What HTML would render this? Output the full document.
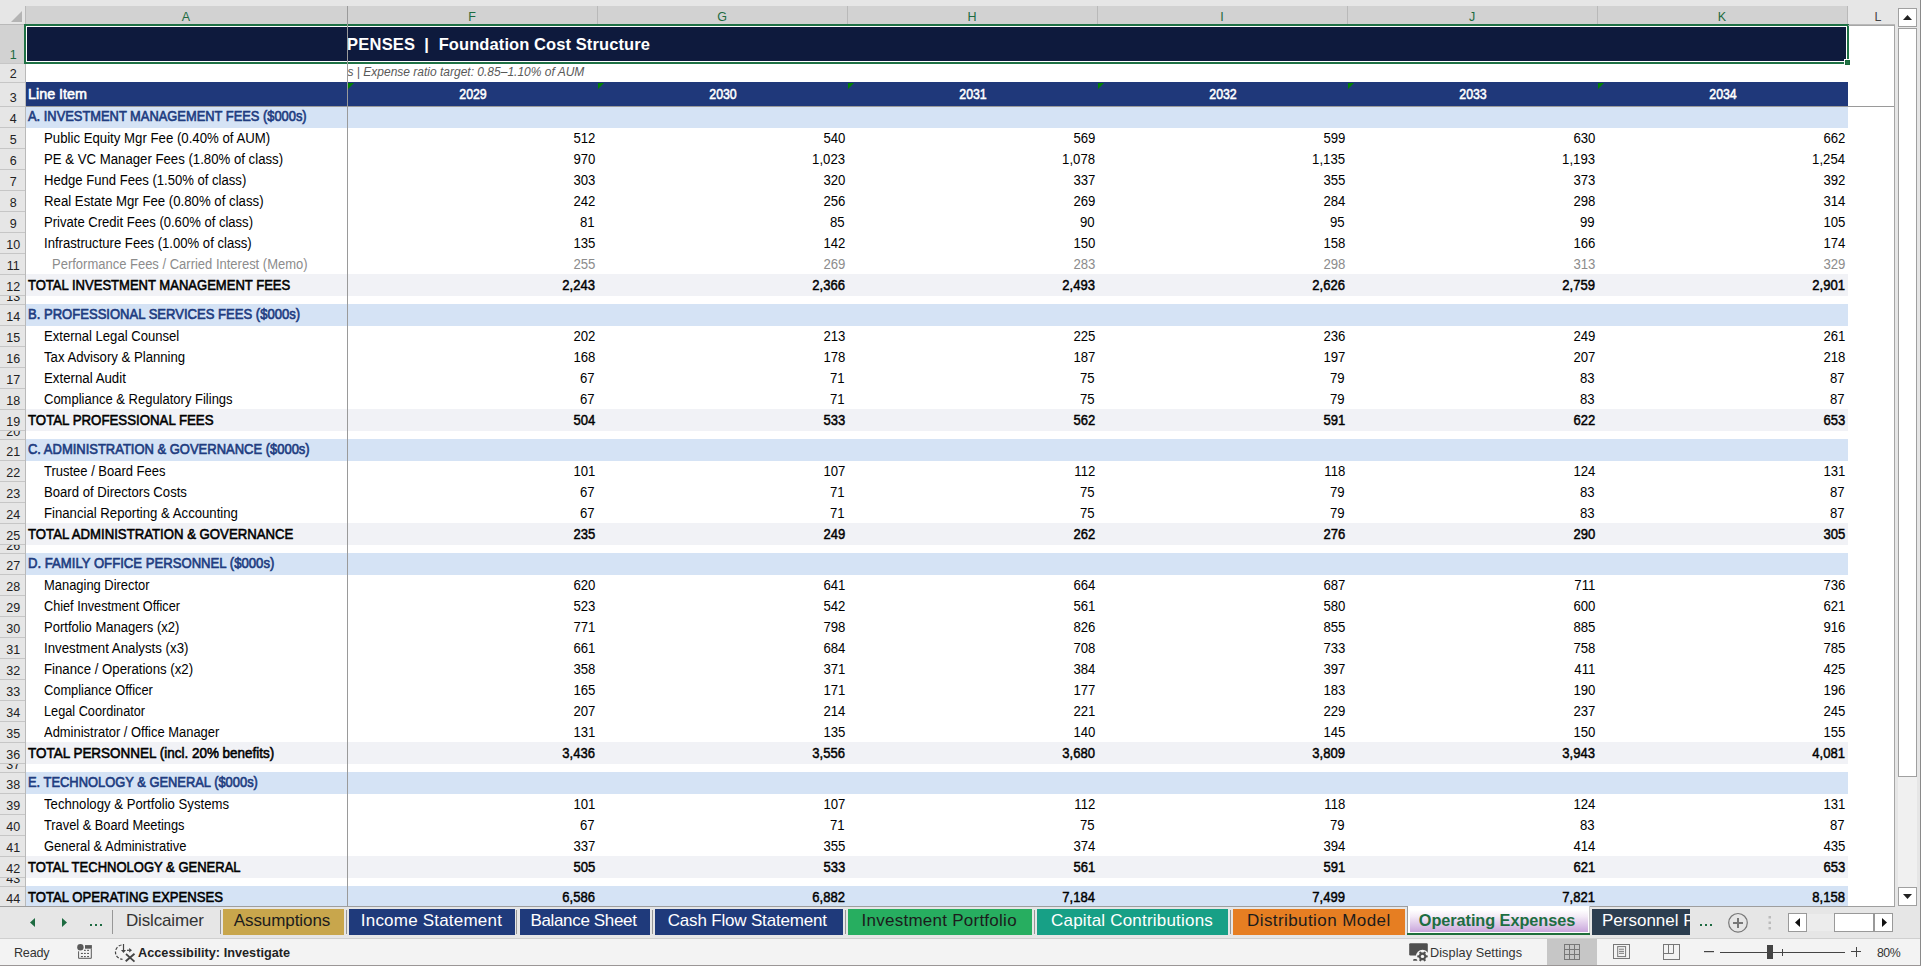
<!DOCTYPE html><html><head><meta charset="utf-8"><style>
html,body{margin:0;padding:0;}
body{width:1921px;height:966px;overflow:hidden;position:relative;background:#fff;font-family:"Liberation Sans", sans-serif;}
div{box-sizing:border-box;}
</style></head><body>
<div style="position:absolute;left:0px;top:0px;width:1921px;height:24px;background:#e6e6e6"></div>
<div style="position:absolute;left:25px;top:6px;width:1823px;height:18px;background:#d2d2d2"></div>
<svg style="position:absolute;left:0;top:0" width="25" height="24"><polygon points="11,22 22,22 22,11" fill="#b4b4b4"/></svg>
<div style="position:absolute;left:25px;top:6px;width:1px;height:18px;background:#b9b9b9"></div>
<div style="position:absolute;left:347px;top:6px;width:1px;height:18px;background:#b9b9b9"></div>
<div style="position:absolute;left:597px;top:6px;width:1px;height:18px;background:#b9b9b9"></div>
<div style="position:absolute;left:847px;top:6px;width:1px;height:18px;background:#b9b9b9"></div>
<div style="position:absolute;left:1097px;top:6px;width:1px;height:18px;background:#b9b9b9"></div>
<div style="position:absolute;left:1347px;top:6px;width:1px;height:18px;background:#b9b9b9"></div>
<div style="position:absolute;left:1597px;top:6px;width:1px;height:18px;background:#b9b9b9"></div>
<div style="position:absolute;left:1847px;top:6px;width:1px;height:18px;background:#b9b9b9"></div>
<div style="position:absolute;left:0px;top:24px;width:1895px;height:1px;background:#b9b9b9"></div>
<div style="position:absolute;left:-14.0px;width:400px;text-align:center;top:6.67px;height:20px;line-height:20px;font-size:12.5px;white-space:pre;color:#1d6b41">A</div>
<div style="position:absolute;left:272.0px;width:400px;text-align:center;top:6.67px;height:20px;line-height:20px;font-size:12.5px;white-space:pre;color:#1d6b41">F</div>
<div style="position:absolute;left:522.0px;width:400px;text-align:center;top:6.67px;height:20px;line-height:20px;font-size:12.5px;white-space:pre;color:#1d6b41">G</div>
<div style="position:absolute;left:772.0px;width:400px;text-align:center;top:6.67px;height:20px;line-height:20px;font-size:12.5px;white-space:pre;color:#1d6b41">H</div>
<div style="position:absolute;left:1022.0px;width:400px;text-align:center;top:6.67px;height:20px;line-height:20px;font-size:12.5px;white-space:pre;color:#1d6b41">I</div>
<div style="position:absolute;left:1272.0px;width:400px;text-align:center;top:6.67px;height:20px;line-height:20px;font-size:12.5px;white-space:pre;color:#1d6b41">J</div>
<div style="position:absolute;left:1522.0px;width:400px;text-align:center;top:6.67px;height:20px;line-height:20px;font-size:12.5px;white-space:pre;color:#1d6b41">K</div>
<div style="position:absolute;left:1678px;width:400px;text-align:center;top:6.67px;height:20px;line-height:20px;font-size:12.5px;white-space:pre;color:#444">L</div>
<div style="position:absolute;left:0px;top:25px;width:25px;height:881px;background:#e6e6e6"></div>
<div style="position:absolute;left:25px;top:25px;width:1px;height:881px;background:#b9b9b9"></div>
<div style="position:absolute;left:0px;top:25px;width:25px;height:38px;background:#d2d2d2"></div>
<div style="position:absolute;left:0px;top:63px;width:25px;height:1px;background:#c6c6c6"></div>
<div style="position:absolute;left:-186.7px;width:400px;text-align:center;top:44.67px;height:20px;line-height:20px;font-size:12.5px;white-space:pre;color:#1d6b41">1</div>
<div style="position:absolute;left:0px;top:82px;width:25px;height:1px;background:#c6c6c6"></div>
<div style="position:absolute;left:-186.7px;width:400px;text-align:center;top:63.67px;height:20px;line-height:20px;font-size:12.5px;white-space:pre;color:#222">2</div>
<div style="position:absolute;left:0px;top:106px;width:25px;height:1px;background:#c6c6c6"></div>
<div style="position:absolute;left:-186.7px;width:400px;text-align:center;top:87.67px;height:20px;line-height:20px;font-size:12.5px;white-space:pre;color:#222">3</div>
<div style="position:absolute;left:0px;top:127px;width:25px;height:1px;background:#c6c6c6"></div>
<div style="position:absolute;left:-186.7px;width:400px;text-align:center;top:108.67px;height:20px;line-height:20px;font-size:12.5px;white-space:pre;color:#222">4</div>
<div style="position:absolute;left:0px;top:148px;width:25px;height:1px;background:#c6c6c6"></div>
<div style="position:absolute;left:-186.7px;width:400px;text-align:center;top:129.67px;height:20px;line-height:20px;font-size:12.5px;white-space:pre;color:#222">5</div>
<div style="position:absolute;left:0px;top:169px;width:25px;height:1px;background:#c6c6c6"></div>
<div style="position:absolute;left:-186.7px;width:400px;text-align:center;top:150.67px;height:20px;line-height:20px;font-size:12.5px;white-space:pre;color:#222">6</div>
<div style="position:absolute;left:0px;top:190px;width:25px;height:1px;background:#c6c6c6"></div>
<div style="position:absolute;left:-186.7px;width:400px;text-align:center;top:171.67px;height:20px;line-height:20px;font-size:12.5px;white-space:pre;color:#222">7</div>
<div style="position:absolute;left:0px;top:211px;width:25px;height:1px;background:#c6c6c6"></div>
<div style="position:absolute;left:-186.7px;width:400px;text-align:center;top:192.67px;height:20px;line-height:20px;font-size:12.5px;white-space:pre;color:#222">8</div>
<div style="position:absolute;left:0px;top:232px;width:25px;height:1px;background:#c6c6c6"></div>
<div style="position:absolute;left:-186.7px;width:400px;text-align:center;top:213.67px;height:20px;line-height:20px;font-size:12.5px;white-space:pre;color:#222">9</div>
<div style="position:absolute;left:0px;top:253px;width:25px;height:1px;background:#c6c6c6"></div>
<div style="position:absolute;left:-186.7px;width:400px;text-align:center;top:234.67px;height:20px;line-height:20px;font-size:12.5px;white-space:pre;color:#222">10</div>
<div style="position:absolute;left:0px;top:274px;width:25px;height:1px;background:#c6c6c6"></div>
<div style="position:absolute;left:-186.7px;width:400px;text-align:center;top:255.67px;height:20px;line-height:20px;font-size:12.5px;white-space:pre;color:#222">11</div>
<div style="position:absolute;left:0px;top:295px;width:25px;height:1px;background:#c6c6c6"></div>
<div style="position:absolute;left:-186.7px;width:400px;text-align:center;top:276.67px;height:20px;line-height:20px;font-size:12.5px;white-space:pre;color:#222">12</div>
<div style="position:absolute;left:0px;top:304px;width:25px;height:1px;background:#c6c6c6"></div>
<div style="position:absolute;left:0;top:296px;width:25px;height:8px;overflow:hidden">
<div style="position:absolute;left:0.8px;width:25px;text-align:center;top:-9.33px;line-height:20px;font-size:12.5px;color:#222">13</div></div>
<div style="position:absolute;left:0px;top:325px;width:25px;height:1px;background:#c6c6c6"></div>
<div style="position:absolute;left:-186.7px;width:400px;text-align:center;top:306.67px;height:20px;line-height:20px;font-size:12.5px;white-space:pre;color:#222">14</div>
<div style="position:absolute;left:0px;top:346px;width:25px;height:1px;background:#c6c6c6"></div>
<div style="position:absolute;left:-186.7px;width:400px;text-align:center;top:327.67px;height:20px;line-height:20px;font-size:12.5px;white-space:pre;color:#222">15</div>
<div style="position:absolute;left:0px;top:367px;width:25px;height:1px;background:#c6c6c6"></div>
<div style="position:absolute;left:-186.7px;width:400px;text-align:center;top:348.67px;height:20px;line-height:20px;font-size:12.5px;white-space:pre;color:#222">16</div>
<div style="position:absolute;left:0px;top:388px;width:25px;height:1px;background:#c6c6c6"></div>
<div style="position:absolute;left:-186.7px;width:400px;text-align:center;top:369.67px;height:20px;line-height:20px;font-size:12.5px;white-space:pre;color:#222">17</div>
<div style="position:absolute;left:0px;top:409px;width:25px;height:1px;background:#c6c6c6"></div>
<div style="position:absolute;left:-186.7px;width:400px;text-align:center;top:390.67px;height:20px;line-height:20px;font-size:12.5px;white-space:pre;color:#222">18</div>
<div style="position:absolute;left:0px;top:430px;width:25px;height:1px;background:#c6c6c6"></div>
<div style="position:absolute;left:-186.7px;width:400px;text-align:center;top:411.67px;height:20px;line-height:20px;font-size:12.5px;white-space:pre;color:#222">19</div>
<div style="position:absolute;left:0px;top:439px;width:25px;height:1px;background:#c6c6c6"></div>
<div style="position:absolute;left:0;top:431px;width:25px;height:8px;overflow:hidden">
<div style="position:absolute;left:0.8px;width:25px;text-align:center;top:-9.33px;line-height:20px;font-size:12.5px;color:#222">20</div></div>
<div style="position:absolute;left:0px;top:460px;width:25px;height:1px;background:#c6c6c6"></div>
<div style="position:absolute;left:-186.7px;width:400px;text-align:center;top:441.67px;height:20px;line-height:20px;font-size:12.5px;white-space:pre;color:#222">21</div>
<div style="position:absolute;left:0px;top:481px;width:25px;height:1px;background:#c6c6c6"></div>
<div style="position:absolute;left:-186.7px;width:400px;text-align:center;top:462.67px;height:20px;line-height:20px;font-size:12.5px;white-space:pre;color:#222">22</div>
<div style="position:absolute;left:0px;top:502px;width:25px;height:1px;background:#c6c6c6"></div>
<div style="position:absolute;left:-186.7px;width:400px;text-align:center;top:483.67px;height:20px;line-height:20px;font-size:12.5px;white-space:pre;color:#222">23</div>
<div style="position:absolute;left:0px;top:523px;width:25px;height:1px;background:#c6c6c6"></div>
<div style="position:absolute;left:-186.7px;width:400px;text-align:center;top:504.67px;height:20px;line-height:20px;font-size:12.5px;white-space:pre;color:#222">24</div>
<div style="position:absolute;left:0px;top:544px;width:25px;height:1px;background:#c6c6c6"></div>
<div style="position:absolute;left:-186.7px;width:400px;text-align:center;top:525.67px;height:20px;line-height:20px;font-size:12.5px;white-space:pre;color:#222">25</div>
<div style="position:absolute;left:0px;top:553px;width:25px;height:1px;background:#c6c6c6"></div>
<div style="position:absolute;left:0;top:545px;width:25px;height:8px;overflow:hidden">
<div style="position:absolute;left:0.8px;width:25px;text-align:center;top:-9.33px;line-height:20px;font-size:12.5px;color:#222">26</div></div>
<div style="position:absolute;left:0px;top:574px;width:25px;height:1px;background:#c6c6c6"></div>
<div style="position:absolute;left:-186.7px;width:400px;text-align:center;top:555.67px;height:20px;line-height:20px;font-size:12.5px;white-space:pre;color:#222">27</div>
<div style="position:absolute;left:0px;top:595px;width:25px;height:1px;background:#c6c6c6"></div>
<div style="position:absolute;left:-186.7px;width:400px;text-align:center;top:576.67px;height:20px;line-height:20px;font-size:12.5px;white-space:pre;color:#222">28</div>
<div style="position:absolute;left:0px;top:616px;width:25px;height:1px;background:#c6c6c6"></div>
<div style="position:absolute;left:-186.7px;width:400px;text-align:center;top:597.67px;height:20px;line-height:20px;font-size:12.5px;white-space:pre;color:#222">29</div>
<div style="position:absolute;left:0px;top:637px;width:25px;height:1px;background:#c6c6c6"></div>
<div style="position:absolute;left:-186.7px;width:400px;text-align:center;top:618.67px;height:20px;line-height:20px;font-size:12.5px;white-space:pre;color:#222">30</div>
<div style="position:absolute;left:0px;top:658px;width:25px;height:1px;background:#c6c6c6"></div>
<div style="position:absolute;left:-186.7px;width:400px;text-align:center;top:639.67px;height:20px;line-height:20px;font-size:12.5px;white-space:pre;color:#222">31</div>
<div style="position:absolute;left:0px;top:679px;width:25px;height:1px;background:#c6c6c6"></div>
<div style="position:absolute;left:-186.7px;width:400px;text-align:center;top:660.67px;height:20px;line-height:20px;font-size:12.5px;white-space:pre;color:#222">32</div>
<div style="position:absolute;left:0px;top:700px;width:25px;height:1px;background:#c6c6c6"></div>
<div style="position:absolute;left:-186.7px;width:400px;text-align:center;top:681.67px;height:20px;line-height:20px;font-size:12.5px;white-space:pre;color:#222">33</div>
<div style="position:absolute;left:0px;top:721px;width:25px;height:1px;background:#c6c6c6"></div>
<div style="position:absolute;left:-186.7px;width:400px;text-align:center;top:702.67px;height:20px;line-height:20px;font-size:12.5px;white-space:pre;color:#222">34</div>
<div style="position:absolute;left:0px;top:742px;width:25px;height:1px;background:#c6c6c6"></div>
<div style="position:absolute;left:-186.7px;width:400px;text-align:center;top:723.67px;height:20px;line-height:20px;font-size:12.5px;white-space:pre;color:#222">35</div>
<div style="position:absolute;left:0px;top:763px;width:25px;height:1px;background:#c6c6c6"></div>
<div style="position:absolute;left:-186.7px;width:400px;text-align:center;top:744.67px;height:20px;line-height:20px;font-size:12.5px;white-space:pre;color:#222">36</div>
<div style="position:absolute;left:0px;top:772px;width:25px;height:1px;background:#c6c6c6"></div>
<div style="position:absolute;left:0;top:764px;width:25px;height:8px;overflow:hidden">
<div style="position:absolute;left:0.8px;width:25px;text-align:center;top:-9.33px;line-height:20px;font-size:12.5px;color:#222">37</div></div>
<div style="position:absolute;left:0px;top:793px;width:25px;height:1px;background:#c6c6c6"></div>
<div style="position:absolute;left:-186.7px;width:400px;text-align:center;top:774.67px;height:20px;line-height:20px;font-size:12.5px;white-space:pre;color:#222">38</div>
<div style="position:absolute;left:0px;top:814px;width:25px;height:1px;background:#c6c6c6"></div>
<div style="position:absolute;left:-186.7px;width:400px;text-align:center;top:795.67px;height:20px;line-height:20px;font-size:12.5px;white-space:pre;color:#222">39</div>
<div style="position:absolute;left:0px;top:835px;width:25px;height:1px;background:#c6c6c6"></div>
<div style="position:absolute;left:-186.7px;width:400px;text-align:center;top:816.67px;height:20px;line-height:20px;font-size:12.5px;white-space:pre;color:#222">40</div>
<div style="position:absolute;left:0px;top:856px;width:25px;height:1px;background:#c6c6c6"></div>
<div style="position:absolute;left:-186.7px;width:400px;text-align:center;top:837.67px;height:20px;line-height:20px;font-size:12.5px;white-space:pre;color:#222">41</div>
<div style="position:absolute;left:0px;top:877px;width:25px;height:1px;background:#c6c6c6"></div>
<div style="position:absolute;left:-186.7px;width:400px;text-align:center;top:858.67px;height:20px;line-height:20px;font-size:12.5px;white-space:pre;color:#222">42</div>
<div style="position:absolute;left:0px;top:886px;width:25px;height:1px;background:#c6c6c6"></div>
<div style="position:absolute;left:0;top:878px;width:25px;height:8px;overflow:hidden">
<div style="position:absolute;left:0.8px;width:25px;text-align:center;top:-9.33px;line-height:20px;font-size:12.5px;color:#222">43</div></div>
<div style="position:absolute;left:0px;top:907px;width:25px;height:1px;background:#c6c6c6"></div>
<div style="position:absolute;left:-186.7px;width:400px;text-align:center;top:888.67px;height:20px;line-height:20px;font-size:12.5px;white-space:pre;color:#222">44</div>
<div style="position:absolute;left:26px;top:25px;width:1821px;height:38px;background:#0e1a3d"></div>
<div style="position:absolute;left:26px;top:82px;width:1822px;height:24px;background:#1f387a"></div>
<div style="position:absolute;left:26px;top:106px;width:1869px;height:1px;background:#9a9a9a"></div>
<div style="position:absolute;left:26px;top:107px;width:1822px;height:21px;background:#d5e3f5"></div>
<div style="position:absolute;left:26px;top:274px;width:1822px;height:22px;background:#f1f2f6"></div>
<div style="position:absolute;left:26px;top:304px;width:1822px;height:22px;background:#d5e3f5"></div>
<div style="position:absolute;left:26px;top:409px;width:1822px;height:22px;background:#f1f2f6"></div>
<div style="position:absolute;left:26px;top:439px;width:1822px;height:22px;background:#d5e3f5"></div>
<div style="position:absolute;left:26px;top:523px;width:1822px;height:22px;background:#f1f2f6"></div>
<div style="position:absolute;left:26px;top:553px;width:1822px;height:22px;background:#d5e3f5"></div>
<div style="position:absolute;left:26px;top:742px;width:1822px;height:22px;background:#f1f2f6"></div>
<div style="position:absolute;left:26px;top:772px;width:1822px;height:22px;background:#d5e3f5"></div>
<div style="position:absolute;left:26px;top:856px;width:1822px;height:22px;background:#f1f2f6"></div>
<div style="position:absolute;left:26px;top:886px;width:1822px;height:22px;background:#d5e3f5"></div>
<div style="position:absolute;left:24px;top:24px;width:1825px;height:40px;border:2px solid #1e7145;"></div>
<div style="position:absolute;left:26px;top:26px;width:1821px;height:36px;border:1px solid #fff;"></div>
<div style="position:absolute;left:1844px;top:59px;width:7px;height:7px;background:#fff"></div>
<div style="position:absolute;left:1845px;top:60px;width:5px;height:5px;background:#217346;border:1px solid #1a6a3a"></div>
<div style="position:absolute;left:348px;top:25px;width:1498px;height:38px;overflow:hidden">
<div style="position:absolute;transform-origin:0 0;left:-0.9px;top:9.28px;height:20px;line-height:20px;font-size:16.5px;white-space:pre;color:#fff;font-weight:bold;letter-spacing:0.2px">PENSES</div>
<div style="position:absolute;transform-origin:0 0;left:76.2px;top:9.28px;height:20px;line-height:20px;font-size:16.5px;white-space:pre;color:#fff;font-weight:bold">|</div>
<div style="position:absolute;transform-origin:0 0;left:90.7px;top:9.28px;height:20px;line-height:20px;font-size:16.5px;white-space:pre;color:#fff;font-weight:bold;letter-spacing:0.09px">Foundation Cost Structure</div>
</div>
<div style="position:absolute;left:348px;top:63px;width:1498px;height:19px;overflow:hidden">
<div style="position:absolute;transform-origin:0 0;left:-0.5px;top:-1.16px;height:20px;line-height:20px;font-size:12px;white-space:pre;color:#595959;font-style:italic">s | Expense ratio target: 0.85–1.10% of AUM</div>
</div>
<div style="position:absolute;transform-origin:0 0;left:28px;top:83.65px;height:20px;line-height:20px;font-size:14px;white-space:pre;color:#fff;-webkit-text-stroke:0.55px currentColor;transform:scaleX(1.025)">Line Item</div>
<div style="position:absolute;left:273.0px;width:400px;text-align:center;top:84.15px;height:20px;line-height:20px;font-size:14px;white-space:pre;color:#fff;font-weight:normal;-webkit-text-stroke:0.55px currentColor;transform:scaleX(0.933);transform:scaleX(0.88)">2029</div>
<svg style="position:absolute;left:348px;top:83px" width="6" height="6"><polygon points="0,0 6,0 0,6" fill="#008000"/></svg>
<div style="position:absolute;left:523.0px;width:400px;text-align:center;top:84.15px;height:20px;line-height:20px;font-size:14px;white-space:pre;color:#fff;font-weight:normal;-webkit-text-stroke:0.55px currentColor;transform:scaleX(0.933);transform:scaleX(0.88)">2030</div>
<svg style="position:absolute;left:598px;top:83px" width="6" height="6"><polygon points="0,0 6,0 0,6" fill="#008000"/></svg>
<div style="position:absolute;left:773.0px;width:400px;text-align:center;top:84.15px;height:20px;line-height:20px;font-size:14px;white-space:pre;color:#fff;font-weight:normal;-webkit-text-stroke:0.55px currentColor;transform:scaleX(0.933);transform:scaleX(0.88)">2031</div>
<svg style="position:absolute;left:848px;top:83px" width="6" height="6"><polygon points="0,0 6,0 0,6" fill="#008000"/></svg>
<div style="position:absolute;left:1023.0px;width:400px;text-align:center;top:84.15px;height:20px;line-height:20px;font-size:14px;white-space:pre;color:#fff;font-weight:normal;-webkit-text-stroke:0.55px currentColor;transform:scaleX(0.933);transform:scaleX(0.88)">2032</div>
<svg style="position:absolute;left:1098px;top:83px" width="6" height="6"><polygon points="0,0 6,0 0,6" fill="#008000"/></svg>
<div style="position:absolute;left:1273.0px;width:400px;text-align:center;top:84.15px;height:20px;line-height:20px;font-size:14px;white-space:pre;color:#fff;font-weight:normal;-webkit-text-stroke:0.55px currentColor;transform:scaleX(0.933);transform:scaleX(0.88)">2033</div>
<svg style="position:absolute;left:1348px;top:83px" width="6" height="6"><polygon points="0,0 6,0 0,6" fill="#008000"/></svg>
<div style="position:absolute;left:1523.0px;width:400px;text-align:center;top:84.15px;height:20px;line-height:20px;font-size:14px;white-space:pre;color:#fff;font-weight:normal;-webkit-text-stroke:0.55px currentColor;transform:scaleX(0.933);transform:scaleX(0.88)">2034</div>
<svg style="position:absolute;left:1598px;top:83px" width="6" height="6"><polygon points="0,0 6,0 0,6" fill="#008000"/></svg>
<div style="position:absolute;transform-origin:0 0;left:28px;top:106.15px;height:20px;line-height:20px;font-size:14px;white-space:pre;color:#203c80;font-weight:normal;-webkit-text-stroke:0.55px currentColor;transform:scaleX(0.933);-webkit-text-stroke:0.62px currentColor;transform:scaleX(0.92)">A. INVESTMENT MANAGEMENT FEES ($000s)</div>
<div style="position:absolute;transform-origin:0 0;left:43.7px;top:128.15px;height:20px;line-height:20px;font-size:14px;white-space:pre;color:#000;transform:scaleX(0.9437)">Public Equity Mgr Fee (0.40% of AUM)</div>
<div style="position:absolute;transform-origin:100% 0;right:1326px;top:128.15px;height:20px;line-height:20px;font-size:14px;white-space:pre;color:#000;transform:scaleX(0.94)">512</div>
<div style="position:absolute;transform-origin:100% 0;right:1076px;top:128.15px;height:20px;line-height:20px;font-size:14px;white-space:pre;color:#000;transform:scaleX(0.94)">540</div>
<div style="position:absolute;transform-origin:100% 0;right:826px;top:128.15px;height:20px;line-height:20px;font-size:14px;white-space:pre;color:#000;transform:scaleX(0.94)">569</div>
<div style="position:absolute;transform-origin:100% 0;right:576px;top:128.15px;height:20px;line-height:20px;font-size:14px;white-space:pre;color:#000;transform:scaleX(0.94)">599</div>
<div style="position:absolute;transform-origin:100% 0;right:326px;top:128.15px;height:20px;line-height:20px;font-size:14px;white-space:pre;color:#000;transform:scaleX(0.94)">630</div>
<div style="position:absolute;transform-origin:100% 0;right:76px;top:128.15px;height:20px;line-height:20px;font-size:14px;white-space:pre;color:#000;transform:scaleX(0.94)">662</div>
<div style="position:absolute;transform-origin:0 0;left:43.7px;top:149.15px;height:20px;line-height:20px;font-size:14px;white-space:pre;color:#000;transform:scaleX(0.9425)">PE &amp; VC Manager Fees (1.80% of class)</div>
<div style="position:absolute;transform-origin:100% 0;right:1326px;top:149.15px;height:20px;line-height:20px;font-size:14px;white-space:pre;color:#000;transform:scaleX(0.94)">970</div>
<div style="position:absolute;transform-origin:100% 0;right:1076px;top:149.15px;height:20px;line-height:20px;font-size:14px;white-space:pre;color:#000;transform:scaleX(0.94)">1,023</div>
<div style="position:absolute;transform-origin:100% 0;right:826px;top:149.15px;height:20px;line-height:20px;font-size:14px;white-space:pre;color:#000;transform:scaleX(0.94)">1,078</div>
<div style="position:absolute;transform-origin:100% 0;right:576px;top:149.15px;height:20px;line-height:20px;font-size:14px;white-space:pre;color:#000;transform:scaleX(0.94)">1,135</div>
<div style="position:absolute;transform-origin:100% 0;right:326px;top:149.15px;height:20px;line-height:20px;font-size:14px;white-space:pre;color:#000;transform:scaleX(0.94)">1,193</div>
<div style="position:absolute;transform-origin:100% 0;right:76px;top:149.15px;height:20px;line-height:20px;font-size:14px;white-space:pre;color:#000;transform:scaleX(0.94)">1,254</div>
<div style="position:absolute;transform-origin:0 0;left:43.7px;top:170.15px;height:20px;line-height:20px;font-size:14px;white-space:pre;color:#000;transform:scaleX(0.9349)">Hedge Fund Fees (1.50% of class)</div>
<div style="position:absolute;transform-origin:100% 0;right:1326px;top:170.15px;height:20px;line-height:20px;font-size:14px;white-space:pre;color:#000;transform:scaleX(0.94)">303</div>
<div style="position:absolute;transform-origin:100% 0;right:1076px;top:170.15px;height:20px;line-height:20px;font-size:14px;white-space:pre;color:#000;transform:scaleX(0.94)">320</div>
<div style="position:absolute;transform-origin:100% 0;right:826px;top:170.15px;height:20px;line-height:20px;font-size:14px;white-space:pre;color:#000;transform:scaleX(0.94)">337</div>
<div style="position:absolute;transform-origin:100% 0;right:576px;top:170.15px;height:20px;line-height:20px;font-size:14px;white-space:pre;color:#000;transform:scaleX(0.94)">355</div>
<div style="position:absolute;transform-origin:100% 0;right:326px;top:170.15px;height:20px;line-height:20px;font-size:14px;white-space:pre;color:#000;transform:scaleX(0.94)">373</div>
<div style="position:absolute;transform-origin:100% 0;right:76px;top:170.15px;height:20px;line-height:20px;font-size:14px;white-space:pre;color:#000;transform:scaleX(0.94)">392</div>
<div style="position:absolute;transform-origin:0 0;left:43.7px;top:191.15px;height:20px;line-height:20px;font-size:14px;white-space:pre;color:#000;transform:scaleX(0.9437)">Real Estate Mgr Fee (0.80% of class)</div>
<div style="position:absolute;transform-origin:100% 0;right:1326px;top:191.15px;height:20px;line-height:20px;font-size:14px;white-space:pre;color:#000;transform:scaleX(0.94)">242</div>
<div style="position:absolute;transform-origin:100% 0;right:1076px;top:191.15px;height:20px;line-height:20px;font-size:14px;white-space:pre;color:#000;transform:scaleX(0.94)">256</div>
<div style="position:absolute;transform-origin:100% 0;right:826px;top:191.15px;height:20px;line-height:20px;font-size:14px;white-space:pre;color:#000;transform:scaleX(0.94)">269</div>
<div style="position:absolute;transform-origin:100% 0;right:576px;top:191.15px;height:20px;line-height:20px;font-size:14px;white-space:pre;color:#000;transform:scaleX(0.94)">284</div>
<div style="position:absolute;transform-origin:100% 0;right:326px;top:191.15px;height:20px;line-height:20px;font-size:14px;white-space:pre;color:#000;transform:scaleX(0.94)">298</div>
<div style="position:absolute;transform-origin:100% 0;right:76px;top:191.15px;height:20px;line-height:20px;font-size:14px;white-space:pre;color:#000;transform:scaleX(0.94)">314</div>
<div style="position:absolute;transform-origin:0 0;left:43.7px;top:212.15px;height:20px;line-height:20px;font-size:14px;white-space:pre;color:#000;transform:scaleX(0.9327)">Private Credit Fees (0.60% of class)</div>
<div style="position:absolute;transform-origin:100% 0;right:1326px;top:212.15px;height:20px;line-height:20px;font-size:14px;white-space:pre;color:#000;transform:scaleX(0.94)">81</div>
<div style="position:absolute;transform-origin:100% 0;right:1076px;top:212.15px;height:20px;line-height:20px;font-size:14px;white-space:pre;color:#000;transform:scaleX(0.94)">85</div>
<div style="position:absolute;transform-origin:100% 0;right:826px;top:212.15px;height:20px;line-height:20px;font-size:14px;white-space:pre;color:#000;transform:scaleX(0.94)">90</div>
<div style="position:absolute;transform-origin:100% 0;right:576px;top:212.15px;height:20px;line-height:20px;font-size:14px;white-space:pre;color:#000;transform:scaleX(0.94)">95</div>
<div style="position:absolute;transform-origin:100% 0;right:326px;top:212.15px;height:20px;line-height:20px;font-size:14px;white-space:pre;color:#000;transform:scaleX(0.94)">99</div>
<div style="position:absolute;transform-origin:100% 0;right:76px;top:212.15px;height:20px;line-height:20px;font-size:14px;white-space:pre;color:#000;transform:scaleX(0.94)">105</div>
<div style="position:absolute;transform-origin:0 0;left:43.7px;top:233.15px;height:20px;line-height:20px;font-size:14px;white-space:pre;color:#000;transform:scaleX(0.9364)">Infrastructure Fees (1.00% of class)</div>
<div style="position:absolute;transform-origin:100% 0;right:1326px;top:233.15px;height:20px;line-height:20px;font-size:14px;white-space:pre;color:#000;transform:scaleX(0.94)">135</div>
<div style="position:absolute;transform-origin:100% 0;right:1076px;top:233.15px;height:20px;line-height:20px;font-size:14px;white-space:pre;color:#000;transform:scaleX(0.94)">142</div>
<div style="position:absolute;transform-origin:100% 0;right:826px;top:233.15px;height:20px;line-height:20px;font-size:14px;white-space:pre;color:#000;transform:scaleX(0.94)">150</div>
<div style="position:absolute;transform-origin:100% 0;right:576px;top:233.15px;height:20px;line-height:20px;font-size:14px;white-space:pre;color:#000;transform:scaleX(0.94)">158</div>
<div style="position:absolute;transform-origin:100% 0;right:326px;top:233.15px;height:20px;line-height:20px;font-size:14px;white-space:pre;color:#000;transform:scaleX(0.94)">166</div>
<div style="position:absolute;transform-origin:100% 0;right:76px;top:233.15px;height:20px;line-height:20px;font-size:14px;white-space:pre;color:#000;transform:scaleX(0.94)">174</div>
<div style="position:absolute;transform-origin:0 0;left:52px;top:254.15px;height:20px;line-height:20px;font-size:14px;white-space:pre;color:#8c8c8c;transform:scaleX(0.928)">Performance Fees / Carried Interest (Memo)</div>
<div style="position:absolute;transform-origin:100% 0;right:1326px;top:254.15px;height:20px;line-height:20px;font-size:14px;white-space:pre;color:#8c8c8c;transform:scaleX(0.94)">255</div>
<div style="position:absolute;transform-origin:100% 0;right:1076px;top:254.15px;height:20px;line-height:20px;font-size:14px;white-space:pre;color:#8c8c8c;transform:scaleX(0.94)">269</div>
<div style="position:absolute;transform-origin:100% 0;right:826px;top:254.15px;height:20px;line-height:20px;font-size:14px;white-space:pre;color:#8c8c8c;transform:scaleX(0.94)">283</div>
<div style="position:absolute;transform-origin:100% 0;right:576px;top:254.15px;height:20px;line-height:20px;font-size:14px;white-space:pre;color:#8c8c8c;transform:scaleX(0.94)">298</div>
<div style="position:absolute;transform-origin:100% 0;right:326px;top:254.15px;height:20px;line-height:20px;font-size:14px;white-space:pre;color:#8c8c8c;transform:scaleX(0.94)">313</div>
<div style="position:absolute;transform-origin:100% 0;right:76px;top:254.15px;height:20px;line-height:20px;font-size:14px;white-space:pre;color:#8c8c8c;transform:scaleX(0.94)">329</div>
<div style="position:absolute;transform-origin:0 0;left:28px;top:275.15px;height:20px;line-height:20px;font-size:14px;white-space:pre;color:#000;font-weight:normal;-webkit-text-stroke:0.55px currentColor;transform:scaleX(0.933);transform:scaleX(0.9312)">TOTAL INVESTMENT MANAGEMENT FEES</div>
<div style="position:absolute;transform-origin:100% 0;right:1326px;top:275.15px;height:20px;line-height:20px;font-size:14px;white-space:pre;color:#000;font-weight:normal;-webkit-text-stroke:0.55px currentColor;transform:scaleX(0.933);-webkit-text-stroke:0.45px currentColor">2,243</div>
<div style="position:absolute;transform-origin:100% 0;right:1076px;top:275.15px;height:20px;line-height:20px;font-size:14px;white-space:pre;color:#000;font-weight:normal;-webkit-text-stroke:0.55px currentColor;transform:scaleX(0.933);-webkit-text-stroke:0.45px currentColor">2,366</div>
<div style="position:absolute;transform-origin:100% 0;right:826px;top:275.15px;height:20px;line-height:20px;font-size:14px;white-space:pre;color:#000;font-weight:normal;-webkit-text-stroke:0.55px currentColor;transform:scaleX(0.933);-webkit-text-stroke:0.45px currentColor">2,493</div>
<div style="position:absolute;transform-origin:100% 0;right:576px;top:275.15px;height:20px;line-height:20px;font-size:14px;white-space:pre;color:#000;font-weight:normal;-webkit-text-stroke:0.55px currentColor;transform:scaleX(0.933);-webkit-text-stroke:0.45px currentColor">2,626</div>
<div style="position:absolute;transform-origin:100% 0;right:326px;top:275.15px;height:20px;line-height:20px;font-size:14px;white-space:pre;color:#000;font-weight:normal;-webkit-text-stroke:0.55px currentColor;transform:scaleX(0.933);-webkit-text-stroke:0.45px currentColor">2,759</div>
<div style="position:absolute;transform-origin:100% 0;right:76px;top:275.15px;height:20px;line-height:20px;font-size:14px;white-space:pre;color:#000;font-weight:normal;-webkit-text-stroke:0.55px currentColor;transform:scaleX(0.933);-webkit-text-stroke:0.45px currentColor">2,901</div>
<div style="position:absolute;transform-origin:0 0;left:28px;top:304.15px;height:20px;line-height:20px;font-size:14px;white-space:pre;color:#203c80;font-weight:normal;-webkit-text-stroke:0.55px currentColor;transform:scaleX(0.933);-webkit-text-stroke:0.62px currentColor;transform:scaleX(0.9324)">B. PROFESSIONAL SERVICES FEES ($000s)</div>
<div style="position:absolute;transform-origin:0 0;left:43.7px;top:326.15px;height:20px;line-height:20px;font-size:14px;white-space:pre;color:#000;transform:scaleX(0.9336)">External Legal Counsel</div>
<div style="position:absolute;transform-origin:100% 0;right:1326px;top:326.15px;height:20px;line-height:20px;font-size:14px;white-space:pre;color:#000;transform:scaleX(0.94)">202</div>
<div style="position:absolute;transform-origin:100% 0;right:1076px;top:326.15px;height:20px;line-height:20px;font-size:14px;white-space:pre;color:#000;transform:scaleX(0.94)">213</div>
<div style="position:absolute;transform-origin:100% 0;right:826px;top:326.15px;height:20px;line-height:20px;font-size:14px;white-space:pre;color:#000;transform:scaleX(0.94)">225</div>
<div style="position:absolute;transform-origin:100% 0;right:576px;top:326.15px;height:20px;line-height:20px;font-size:14px;white-space:pre;color:#000;transform:scaleX(0.94)">236</div>
<div style="position:absolute;transform-origin:100% 0;right:326px;top:326.15px;height:20px;line-height:20px;font-size:14px;white-space:pre;color:#000;transform:scaleX(0.94)">249</div>
<div style="position:absolute;transform-origin:100% 0;right:76px;top:326.15px;height:20px;line-height:20px;font-size:14px;white-space:pre;color:#000;transform:scaleX(0.94)">261</div>
<div style="position:absolute;transform-origin:0 0;left:43.7px;top:347.15px;height:20px;line-height:20px;font-size:14px;white-space:pre;color:#000;transform:scaleX(0.94)">Tax Advisory &amp; Planning</div>
<div style="position:absolute;transform-origin:100% 0;right:1326px;top:347.15px;height:20px;line-height:20px;font-size:14px;white-space:pre;color:#000;transform:scaleX(0.94)">168</div>
<div style="position:absolute;transform-origin:100% 0;right:1076px;top:347.15px;height:20px;line-height:20px;font-size:14px;white-space:pre;color:#000;transform:scaleX(0.94)">178</div>
<div style="position:absolute;transform-origin:100% 0;right:826px;top:347.15px;height:20px;line-height:20px;font-size:14px;white-space:pre;color:#000;transform:scaleX(0.94)">187</div>
<div style="position:absolute;transform-origin:100% 0;right:576px;top:347.15px;height:20px;line-height:20px;font-size:14px;white-space:pre;color:#000;transform:scaleX(0.94)">197</div>
<div style="position:absolute;transform-origin:100% 0;right:326px;top:347.15px;height:20px;line-height:20px;font-size:14px;white-space:pre;color:#000;transform:scaleX(0.94)">207</div>
<div style="position:absolute;transform-origin:100% 0;right:76px;top:347.15px;height:20px;line-height:20px;font-size:14px;white-space:pre;color:#000;transform:scaleX(0.94)">218</div>
<div style="position:absolute;transform-origin:0 0;left:43.7px;top:368.15px;height:20px;line-height:20px;font-size:14px;white-space:pre;color:#000;transform:scaleX(0.9477)">External Audit</div>
<div style="position:absolute;transform-origin:100% 0;right:1326px;top:368.15px;height:20px;line-height:20px;font-size:14px;white-space:pre;color:#000;transform:scaleX(0.94)">67</div>
<div style="position:absolute;transform-origin:100% 0;right:1076px;top:368.15px;height:20px;line-height:20px;font-size:14px;white-space:pre;color:#000;transform:scaleX(0.94)">71</div>
<div style="position:absolute;transform-origin:100% 0;right:826px;top:368.15px;height:20px;line-height:20px;font-size:14px;white-space:pre;color:#000;transform:scaleX(0.94)">75</div>
<div style="position:absolute;transform-origin:100% 0;right:576px;top:368.15px;height:20px;line-height:20px;font-size:14px;white-space:pre;color:#000;transform:scaleX(0.94)">79</div>
<div style="position:absolute;transform-origin:100% 0;right:326px;top:368.15px;height:20px;line-height:20px;font-size:14px;white-space:pre;color:#000;transform:scaleX(0.94)">83</div>
<div style="position:absolute;transform-origin:100% 0;right:76px;top:368.15px;height:20px;line-height:20px;font-size:14px;white-space:pre;color:#000;transform:scaleX(0.94)">87</div>
<div style="position:absolute;transform-origin:0 0;left:43.7px;top:389.15px;height:20px;line-height:20px;font-size:14px;white-space:pre;color:#000;transform:scaleX(0.9286)">Compliance &amp; Regulatory Filings</div>
<div style="position:absolute;transform-origin:100% 0;right:1326px;top:389.15px;height:20px;line-height:20px;font-size:14px;white-space:pre;color:#000;transform:scaleX(0.94)">67</div>
<div style="position:absolute;transform-origin:100% 0;right:1076px;top:389.15px;height:20px;line-height:20px;font-size:14px;white-space:pre;color:#000;transform:scaleX(0.94)">71</div>
<div style="position:absolute;transform-origin:100% 0;right:826px;top:389.15px;height:20px;line-height:20px;font-size:14px;white-space:pre;color:#000;transform:scaleX(0.94)">75</div>
<div style="position:absolute;transform-origin:100% 0;right:576px;top:389.15px;height:20px;line-height:20px;font-size:14px;white-space:pre;color:#000;transform:scaleX(0.94)">79</div>
<div style="position:absolute;transform-origin:100% 0;right:326px;top:389.15px;height:20px;line-height:20px;font-size:14px;white-space:pre;color:#000;transform:scaleX(0.94)">83</div>
<div style="position:absolute;transform-origin:100% 0;right:76px;top:389.15px;height:20px;line-height:20px;font-size:14px;white-space:pre;color:#000;transform:scaleX(0.94)">87</div>
<div style="position:absolute;transform-origin:0 0;left:28px;top:410.15px;height:20px;line-height:20px;font-size:14px;white-space:pre;color:#000;font-weight:normal;-webkit-text-stroke:0.55px currentColor;transform:scaleX(0.933);transform:scaleX(0.9464)">TOTAL PROFESSIONAL FEES</div>
<div style="position:absolute;transform-origin:100% 0;right:1326px;top:410.15px;height:20px;line-height:20px;font-size:14px;white-space:pre;color:#000;font-weight:normal;-webkit-text-stroke:0.55px currentColor;transform:scaleX(0.933);-webkit-text-stroke:0.45px currentColor">504</div>
<div style="position:absolute;transform-origin:100% 0;right:1076px;top:410.15px;height:20px;line-height:20px;font-size:14px;white-space:pre;color:#000;font-weight:normal;-webkit-text-stroke:0.55px currentColor;transform:scaleX(0.933);-webkit-text-stroke:0.45px currentColor">533</div>
<div style="position:absolute;transform-origin:100% 0;right:826px;top:410.15px;height:20px;line-height:20px;font-size:14px;white-space:pre;color:#000;font-weight:normal;-webkit-text-stroke:0.55px currentColor;transform:scaleX(0.933);-webkit-text-stroke:0.45px currentColor">562</div>
<div style="position:absolute;transform-origin:100% 0;right:576px;top:410.15px;height:20px;line-height:20px;font-size:14px;white-space:pre;color:#000;font-weight:normal;-webkit-text-stroke:0.55px currentColor;transform:scaleX(0.933);-webkit-text-stroke:0.45px currentColor">591</div>
<div style="position:absolute;transform-origin:100% 0;right:326px;top:410.15px;height:20px;line-height:20px;font-size:14px;white-space:pre;color:#000;font-weight:normal;-webkit-text-stroke:0.55px currentColor;transform:scaleX(0.933);-webkit-text-stroke:0.45px currentColor">622</div>
<div style="position:absolute;transform-origin:100% 0;right:76px;top:410.15px;height:20px;line-height:20px;font-size:14px;white-space:pre;color:#000;font-weight:normal;-webkit-text-stroke:0.55px currentColor;transform:scaleX(0.933);-webkit-text-stroke:0.45px currentColor">653</div>
<div style="position:absolute;transform-origin:0 0;left:28px;top:439.15px;height:20px;line-height:20px;font-size:14px;white-space:pre;color:#203c80;font-weight:normal;-webkit-text-stroke:0.55px currentColor;transform:scaleX(0.933);-webkit-text-stroke:0.62px currentColor;transform:scaleX(0.9268)">C. ADMINISTRATION &amp; GOVERNANCE ($000s)</div>
<div style="position:absolute;transform-origin:0 0;left:43.7px;top:461.15px;height:20px;line-height:20px;font-size:14px;white-space:pre;color:#000;transform:scaleX(0.9275)">Trustee / Board Fees</div>
<div style="position:absolute;transform-origin:100% 0;right:1326px;top:461.15px;height:20px;line-height:20px;font-size:14px;white-space:pre;color:#000;transform:scaleX(0.94)">101</div>
<div style="position:absolute;transform-origin:100% 0;right:1076px;top:461.15px;height:20px;line-height:20px;font-size:14px;white-space:pre;color:#000;transform:scaleX(0.94)">107</div>
<div style="position:absolute;transform-origin:100% 0;right:826px;top:461.15px;height:20px;line-height:20px;font-size:14px;white-space:pre;color:#000;transform:scaleX(0.94)">112</div>
<div style="position:absolute;transform-origin:100% 0;right:576px;top:461.15px;height:20px;line-height:20px;font-size:14px;white-space:pre;color:#000;transform:scaleX(0.94)">118</div>
<div style="position:absolute;transform-origin:100% 0;right:326px;top:461.15px;height:20px;line-height:20px;font-size:14px;white-space:pre;color:#000;transform:scaleX(0.94)">124</div>
<div style="position:absolute;transform-origin:100% 0;right:76px;top:461.15px;height:20px;line-height:20px;font-size:14px;white-space:pre;color:#000;transform:scaleX(0.94)">131</div>
<div style="position:absolute;transform-origin:0 0;left:43.7px;top:482.15px;height:20px;line-height:20px;font-size:14px;white-space:pre;color:#000;transform:scaleX(0.9371)">Board of Directors Costs</div>
<div style="position:absolute;transform-origin:100% 0;right:1326px;top:482.15px;height:20px;line-height:20px;font-size:14px;white-space:pre;color:#000;transform:scaleX(0.94)">67</div>
<div style="position:absolute;transform-origin:100% 0;right:1076px;top:482.15px;height:20px;line-height:20px;font-size:14px;white-space:pre;color:#000;transform:scaleX(0.94)">71</div>
<div style="position:absolute;transform-origin:100% 0;right:826px;top:482.15px;height:20px;line-height:20px;font-size:14px;white-space:pre;color:#000;transform:scaleX(0.94)">75</div>
<div style="position:absolute;transform-origin:100% 0;right:576px;top:482.15px;height:20px;line-height:20px;font-size:14px;white-space:pre;color:#000;transform:scaleX(0.94)">79</div>
<div style="position:absolute;transform-origin:100% 0;right:326px;top:482.15px;height:20px;line-height:20px;font-size:14px;white-space:pre;color:#000;transform:scaleX(0.94)">83</div>
<div style="position:absolute;transform-origin:100% 0;right:76px;top:482.15px;height:20px;line-height:20px;font-size:14px;white-space:pre;color:#000;transform:scaleX(0.94)">87</div>
<div style="position:absolute;transform-origin:0 0;left:43.7px;top:503.15px;height:20px;line-height:20px;font-size:14px;white-space:pre;color:#000;transform:scaleX(0.9402)">Financial Reporting &amp; Accounting</div>
<div style="position:absolute;transform-origin:100% 0;right:1326px;top:503.15px;height:20px;line-height:20px;font-size:14px;white-space:pre;color:#000;transform:scaleX(0.94)">67</div>
<div style="position:absolute;transform-origin:100% 0;right:1076px;top:503.15px;height:20px;line-height:20px;font-size:14px;white-space:pre;color:#000;transform:scaleX(0.94)">71</div>
<div style="position:absolute;transform-origin:100% 0;right:826px;top:503.15px;height:20px;line-height:20px;font-size:14px;white-space:pre;color:#000;transform:scaleX(0.94)">75</div>
<div style="position:absolute;transform-origin:100% 0;right:576px;top:503.15px;height:20px;line-height:20px;font-size:14px;white-space:pre;color:#000;transform:scaleX(0.94)">79</div>
<div style="position:absolute;transform-origin:100% 0;right:326px;top:503.15px;height:20px;line-height:20px;font-size:14px;white-space:pre;color:#000;transform:scaleX(0.94)">83</div>
<div style="position:absolute;transform-origin:100% 0;right:76px;top:503.15px;height:20px;line-height:20px;font-size:14px;white-space:pre;color:#000;transform:scaleX(0.94)">87</div>
<div style="position:absolute;transform-origin:0 0;left:28px;top:524.15px;height:20px;line-height:20px;font-size:14px;white-space:pre;color:#000;font-weight:normal;-webkit-text-stroke:0.55px currentColor;transform:scaleX(0.933);transform:scaleX(0.9415)">TOTAL ADMINISTRATION &amp; GOVERNANCE</div>
<div style="position:absolute;transform-origin:100% 0;right:1326px;top:524.15px;height:20px;line-height:20px;font-size:14px;white-space:pre;color:#000;font-weight:normal;-webkit-text-stroke:0.55px currentColor;transform:scaleX(0.933);-webkit-text-stroke:0.45px currentColor">235</div>
<div style="position:absolute;transform-origin:100% 0;right:1076px;top:524.15px;height:20px;line-height:20px;font-size:14px;white-space:pre;color:#000;font-weight:normal;-webkit-text-stroke:0.55px currentColor;transform:scaleX(0.933);-webkit-text-stroke:0.45px currentColor">249</div>
<div style="position:absolute;transform-origin:100% 0;right:826px;top:524.15px;height:20px;line-height:20px;font-size:14px;white-space:pre;color:#000;font-weight:normal;-webkit-text-stroke:0.55px currentColor;transform:scaleX(0.933);-webkit-text-stroke:0.45px currentColor">262</div>
<div style="position:absolute;transform-origin:100% 0;right:576px;top:524.15px;height:20px;line-height:20px;font-size:14px;white-space:pre;color:#000;font-weight:normal;-webkit-text-stroke:0.55px currentColor;transform:scaleX(0.933);-webkit-text-stroke:0.45px currentColor">276</div>
<div style="position:absolute;transform-origin:100% 0;right:326px;top:524.15px;height:20px;line-height:20px;font-size:14px;white-space:pre;color:#000;font-weight:normal;-webkit-text-stroke:0.55px currentColor;transform:scaleX(0.933);-webkit-text-stroke:0.45px currentColor">290</div>
<div style="position:absolute;transform-origin:100% 0;right:76px;top:524.15px;height:20px;line-height:20px;font-size:14px;white-space:pre;color:#000;font-weight:normal;-webkit-text-stroke:0.55px currentColor;transform:scaleX(0.933);-webkit-text-stroke:0.45px currentColor">305</div>
<div style="position:absolute;transform-origin:0 0;left:28px;top:553.15px;height:20px;line-height:20px;font-size:14px;white-space:pre;color:#203c80;font-weight:normal;-webkit-text-stroke:0.55px currentColor;transform:scaleX(0.933);-webkit-text-stroke:0.62px currentColor;transform:scaleX(0.9377)">D. FAMILY OFFICE PERSONNEL ($000s)</div>
<div style="position:absolute;transform-origin:0 0;left:43.7px;top:575.15px;height:20px;line-height:20px;font-size:14px;white-space:pre;color:#000;transform:scaleX(0.9232)">Managing Director</div>
<div style="position:absolute;transform-origin:100% 0;right:1326px;top:575.15px;height:20px;line-height:20px;font-size:14px;white-space:pre;color:#000;transform:scaleX(0.94)">620</div>
<div style="position:absolute;transform-origin:100% 0;right:1076px;top:575.15px;height:20px;line-height:20px;font-size:14px;white-space:pre;color:#000;transform:scaleX(0.94)">641</div>
<div style="position:absolute;transform-origin:100% 0;right:826px;top:575.15px;height:20px;line-height:20px;font-size:14px;white-space:pre;color:#000;transform:scaleX(0.94)">664</div>
<div style="position:absolute;transform-origin:100% 0;right:576px;top:575.15px;height:20px;line-height:20px;font-size:14px;white-space:pre;color:#000;transform:scaleX(0.94)">687</div>
<div style="position:absolute;transform-origin:100% 0;right:326px;top:575.15px;height:20px;line-height:20px;font-size:14px;white-space:pre;color:#000;transform:scaleX(0.94)">711</div>
<div style="position:absolute;transform-origin:100% 0;right:76px;top:575.15px;height:20px;line-height:20px;font-size:14px;white-space:pre;color:#000;transform:scaleX(0.94)">736</div>
<div style="position:absolute;transform-origin:0 0;left:43.7px;top:596.15px;height:20px;line-height:20px;font-size:14px;white-space:pre;color:#000;transform:scaleX(0.9067)">Chief Investment Officer</div>
<div style="position:absolute;transform-origin:100% 0;right:1326px;top:596.15px;height:20px;line-height:20px;font-size:14px;white-space:pre;color:#000;transform:scaleX(0.94)">523</div>
<div style="position:absolute;transform-origin:100% 0;right:1076px;top:596.15px;height:20px;line-height:20px;font-size:14px;white-space:pre;color:#000;transform:scaleX(0.94)">542</div>
<div style="position:absolute;transform-origin:100% 0;right:826px;top:596.15px;height:20px;line-height:20px;font-size:14px;white-space:pre;color:#000;transform:scaleX(0.94)">561</div>
<div style="position:absolute;transform-origin:100% 0;right:576px;top:596.15px;height:20px;line-height:20px;font-size:14px;white-space:pre;color:#000;transform:scaleX(0.94)">580</div>
<div style="position:absolute;transform-origin:100% 0;right:326px;top:596.15px;height:20px;line-height:20px;font-size:14px;white-space:pre;color:#000;transform:scaleX(0.94)">600</div>
<div style="position:absolute;transform-origin:100% 0;right:76px;top:596.15px;height:20px;line-height:20px;font-size:14px;white-space:pre;color:#000;transform:scaleX(0.94)">621</div>
<div style="position:absolute;transform-origin:0 0;left:43.7px;top:617.15px;height:20px;line-height:20px;font-size:14px;white-space:pre;color:#000;transform:scaleX(0.9306)">Portfolio Managers (x2)</div>
<div style="position:absolute;transform-origin:100% 0;right:1326px;top:617.15px;height:20px;line-height:20px;font-size:14px;white-space:pre;color:#000;transform:scaleX(0.94)">771</div>
<div style="position:absolute;transform-origin:100% 0;right:1076px;top:617.15px;height:20px;line-height:20px;font-size:14px;white-space:pre;color:#000;transform:scaleX(0.94)">798</div>
<div style="position:absolute;transform-origin:100% 0;right:826px;top:617.15px;height:20px;line-height:20px;font-size:14px;white-space:pre;color:#000;transform:scaleX(0.94)">826</div>
<div style="position:absolute;transform-origin:100% 0;right:576px;top:617.15px;height:20px;line-height:20px;font-size:14px;white-space:pre;color:#000;transform:scaleX(0.94)">855</div>
<div style="position:absolute;transform-origin:100% 0;right:326px;top:617.15px;height:20px;line-height:20px;font-size:14px;white-space:pre;color:#000;transform:scaleX(0.94)">885</div>
<div style="position:absolute;transform-origin:100% 0;right:76px;top:617.15px;height:20px;line-height:20px;font-size:14px;white-space:pre;color:#000;transform:scaleX(0.94)">916</div>
<div style="position:absolute;transform-origin:0 0;left:43.7px;top:638.15px;height:20px;line-height:20px;font-size:14px;white-space:pre;color:#000;transform:scaleX(0.947)">Investment Analysts (x3)</div>
<div style="position:absolute;transform-origin:100% 0;right:1326px;top:638.15px;height:20px;line-height:20px;font-size:14px;white-space:pre;color:#000;transform:scaleX(0.94)">661</div>
<div style="position:absolute;transform-origin:100% 0;right:1076px;top:638.15px;height:20px;line-height:20px;font-size:14px;white-space:pre;color:#000;transform:scaleX(0.94)">684</div>
<div style="position:absolute;transform-origin:100% 0;right:826px;top:638.15px;height:20px;line-height:20px;font-size:14px;white-space:pre;color:#000;transform:scaleX(0.94)">708</div>
<div style="position:absolute;transform-origin:100% 0;right:576px;top:638.15px;height:20px;line-height:20px;font-size:14px;white-space:pre;color:#000;transform:scaleX(0.94)">733</div>
<div style="position:absolute;transform-origin:100% 0;right:326px;top:638.15px;height:20px;line-height:20px;font-size:14px;white-space:pre;color:#000;transform:scaleX(0.94)">758</div>
<div style="position:absolute;transform-origin:100% 0;right:76px;top:638.15px;height:20px;line-height:20px;font-size:14px;white-space:pre;color:#000;transform:scaleX(0.94)">785</div>
<div style="position:absolute;transform-origin:0 0;left:43.7px;top:659.15px;height:20px;line-height:20px;font-size:14px;white-space:pre;color:#000;transform:scaleX(0.9439)">Finance / Operations (x2)</div>
<div style="position:absolute;transform-origin:100% 0;right:1326px;top:659.15px;height:20px;line-height:20px;font-size:14px;white-space:pre;color:#000;transform:scaleX(0.94)">358</div>
<div style="position:absolute;transform-origin:100% 0;right:1076px;top:659.15px;height:20px;line-height:20px;font-size:14px;white-space:pre;color:#000;transform:scaleX(0.94)">371</div>
<div style="position:absolute;transform-origin:100% 0;right:826px;top:659.15px;height:20px;line-height:20px;font-size:14px;white-space:pre;color:#000;transform:scaleX(0.94)">384</div>
<div style="position:absolute;transform-origin:100% 0;right:576px;top:659.15px;height:20px;line-height:20px;font-size:14px;white-space:pre;color:#000;transform:scaleX(0.94)">397</div>
<div style="position:absolute;transform-origin:100% 0;right:326px;top:659.15px;height:20px;line-height:20px;font-size:14px;white-space:pre;color:#000;transform:scaleX(0.94)">411</div>
<div style="position:absolute;transform-origin:100% 0;right:76px;top:659.15px;height:20px;line-height:20px;font-size:14px;white-space:pre;color:#000;transform:scaleX(0.94)">425</div>
<div style="position:absolute;transform-origin:0 0;left:43.7px;top:680.15px;height:20px;line-height:20px;font-size:14px;white-space:pre;color:#000;transform:scaleX(0.916)">Compliance Officer</div>
<div style="position:absolute;transform-origin:100% 0;right:1326px;top:680.15px;height:20px;line-height:20px;font-size:14px;white-space:pre;color:#000;transform:scaleX(0.94)">165</div>
<div style="position:absolute;transform-origin:100% 0;right:1076px;top:680.15px;height:20px;line-height:20px;font-size:14px;white-space:pre;color:#000;transform:scaleX(0.94)">171</div>
<div style="position:absolute;transform-origin:100% 0;right:826px;top:680.15px;height:20px;line-height:20px;font-size:14px;white-space:pre;color:#000;transform:scaleX(0.94)">177</div>
<div style="position:absolute;transform-origin:100% 0;right:576px;top:680.15px;height:20px;line-height:20px;font-size:14px;white-space:pre;color:#000;transform:scaleX(0.94)">183</div>
<div style="position:absolute;transform-origin:100% 0;right:326px;top:680.15px;height:20px;line-height:20px;font-size:14px;white-space:pre;color:#000;transform:scaleX(0.94)">190</div>
<div style="position:absolute;transform-origin:100% 0;right:76px;top:680.15px;height:20px;line-height:20px;font-size:14px;white-space:pre;color:#000;transform:scaleX(0.94)">196</div>
<div style="position:absolute;transform-origin:0 0;left:43.7px;top:701.15px;height:20px;line-height:20px;font-size:14px;white-space:pre;color:#000;transform:scaleX(0.9081)">Legal Coordinator</div>
<div style="position:absolute;transform-origin:100% 0;right:1326px;top:701.15px;height:20px;line-height:20px;font-size:14px;white-space:pre;color:#000;transform:scaleX(0.94)">207</div>
<div style="position:absolute;transform-origin:100% 0;right:1076px;top:701.15px;height:20px;line-height:20px;font-size:14px;white-space:pre;color:#000;transform:scaleX(0.94)">214</div>
<div style="position:absolute;transform-origin:100% 0;right:826px;top:701.15px;height:20px;line-height:20px;font-size:14px;white-space:pre;color:#000;transform:scaleX(0.94)">221</div>
<div style="position:absolute;transform-origin:100% 0;right:576px;top:701.15px;height:20px;line-height:20px;font-size:14px;white-space:pre;color:#000;transform:scaleX(0.94)">229</div>
<div style="position:absolute;transform-origin:100% 0;right:326px;top:701.15px;height:20px;line-height:20px;font-size:14px;white-space:pre;color:#000;transform:scaleX(0.94)">237</div>
<div style="position:absolute;transform-origin:100% 0;right:76px;top:701.15px;height:20px;line-height:20px;font-size:14px;white-space:pre;color:#000;transform:scaleX(0.94)">245</div>
<div style="position:absolute;transform-origin:0 0;left:43.7px;top:722.15px;height:20px;line-height:20px;font-size:14px;white-space:pre;color:#000;transform:scaleX(0.9247)">Administrator / Office Manager</div>
<div style="position:absolute;transform-origin:100% 0;right:1326px;top:722.15px;height:20px;line-height:20px;font-size:14px;white-space:pre;color:#000;transform:scaleX(0.94)">131</div>
<div style="position:absolute;transform-origin:100% 0;right:1076px;top:722.15px;height:20px;line-height:20px;font-size:14px;white-space:pre;color:#000;transform:scaleX(0.94)">135</div>
<div style="position:absolute;transform-origin:100% 0;right:826px;top:722.15px;height:20px;line-height:20px;font-size:14px;white-space:pre;color:#000;transform:scaleX(0.94)">140</div>
<div style="position:absolute;transform-origin:100% 0;right:576px;top:722.15px;height:20px;line-height:20px;font-size:14px;white-space:pre;color:#000;transform:scaleX(0.94)">145</div>
<div style="position:absolute;transform-origin:100% 0;right:326px;top:722.15px;height:20px;line-height:20px;font-size:14px;white-space:pre;color:#000;transform:scaleX(0.94)">150</div>
<div style="position:absolute;transform-origin:100% 0;right:76px;top:722.15px;height:20px;line-height:20px;font-size:14px;white-space:pre;color:#000;transform:scaleX(0.94)">155</div>
<div style="position:absolute;transform-origin:0 0;left:28px;top:743.15px;height:20px;line-height:20px;font-size:14px;white-space:pre;color:#000;font-weight:normal;-webkit-text-stroke:0.55px currentColor;transform:scaleX(0.933);transform:scaleX(0.9621)">TOTAL PERSONNEL (incl. 20% benefits)</div>
<div style="position:absolute;transform-origin:100% 0;right:1326px;top:743.15px;height:20px;line-height:20px;font-size:14px;white-space:pre;color:#000;font-weight:normal;-webkit-text-stroke:0.55px currentColor;transform:scaleX(0.933);-webkit-text-stroke:0.45px currentColor">3,436</div>
<div style="position:absolute;transform-origin:100% 0;right:1076px;top:743.15px;height:20px;line-height:20px;font-size:14px;white-space:pre;color:#000;font-weight:normal;-webkit-text-stroke:0.55px currentColor;transform:scaleX(0.933);-webkit-text-stroke:0.45px currentColor">3,556</div>
<div style="position:absolute;transform-origin:100% 0;right:826px;top:743.15px;height:20px;line-height:20px;font-size:14px;white-space:pre;color:#000;font-weight:normal;-webkit-text-stroke:0.55px currentColor;transform:scaleX(0.933);-webkit-text-stroke:0.45px currentColor">3,680</div>
<div style="position:absolute;transform-origin:100% 0;right:576px;top:743.15px;height:20px;line-height:20px;font-size:14px;white-space:pre;color:#000;font-weight:normal;-webkit-text-stroke:0.55px currentColor;transform:scaleX(0.933);-webkit-text-stroke:0.45px currentColor">3,809</div>
<div style="position:absolute;transform-origin:100% 0;right:326px;top:743.15px;height:20px;line-height:20px;font-size:14px;white-space:pre;color:#000;font-weight:normal;-webkit-text-stroke:0.55px currentColor;transform:scaleX(0.933);-webkit-text-stroke:0.45px currentColor">3,943</div>
<div style="position:absolute;transform-origin:100% 0;right:76px;top:743.15px;height:20px;line-height:20px;font-size:14px;white-space:pre;color:#000;font-weight:normal;-webkit-text-stroke:0.55px currentColor;transform:scaleX(0.933);-webkit-text-stroke:0.45px currentColor">4,081</div>
<div style="position:absolute;transform-origin:0 0;left:28px;top:772.15px;height:20px;line-height:20px;font-size:14px;white-space:pre;color:#203c80;font-weight:normal;-webkit-text-stroke:0.55px currentColor;transform:scaleX(0.933);-webkit-text-stroke:0.62px currentColor;transform:scaleX(0.9214)">E. TECHNOLOGY &amp; GENERAL ($000s)</div>
<div style="position:absolute;transform-origin:0 0;left:43.7px;top:794.15px;height:20px;line-height:20px;font-size:14px;white-space:pre;color:#000;transform:scaleX(0.9396)">Technology &amp; Portfolio Systems</div>
<div style="position:absolute;transform-origin:100% 0;right:1326px;top:794.15px;height:20px;line-height:20px;font-size:14px;white-space:pre;color:#000;transform:scaleX(0.94)">101</div>
<div style="position:absolute;transform-origin:100% 0;right:1076px;top:794.15px;height:20px;line-height:20px;font-size:14px;white-space:pre;color:#000;transform:scaleX(0.94)">107</div>
<div style="position:absolute;transform-origin:100% 0;right:826px;top:794.15px;height:20px;line-height:20px;font-size:14px;white-space:pre;color:#000;transform:scaleX(0.94)">112</div>
<div style="position:absolute;transform-origin:100% 0;right:576px;top:794.15px;height:20px;line-height:20px;font-size:14px;white-space:pre;color:#000;transform:scaleX(0.94)">118</div>
<div style="position:absolute;transform-origin:100% 0;right:326px;top:794.15px;height:20px;line-height:20px;font-size:14px;white-space:pre;color:#000;transform:scaleX(0.94)">124</div>
<div style="position:absolute;transform-origin:100% 0;right:76px;top:794.15px;height:20px;line-height:20px;font-size:14px;white-space:pre;color:#000;transform:scaleX(0.94)">131</div>
<div style="position:absolute;transform-origin:0 0;left:43.7px;top:815.15px;height:20px;line-height:20px;font-size:14px;white-space:pre;color:#000;transform:scaleX(0.915)">Travel &amp; Board Meetings</div>
<div style="position:absolute;transform-origin:100% 0;right:1326px;top:815.15px;height:20px;line-height:20px;font-size:14px;white-space:pre;color:#000;transform:scaleX(0.94)">67</div>
<div style="position:absolute;transform-origin:100% 0;right:1076px;top:815.15px;height:20px;line-height:20px;font-size:14px;white-space:pre;color:#000;transform:scaleX(0.94)">71</div>
<div style="position:absolute;transform-origin:100% 0;right:826px;top:815.15px;height:20px;line-height:20px;font-size:14px;white-space:pre;color:#000;transform:scaleX(0.94)">75</div>
<div style="position:absolute;transform-origin:100% 0;right:576px;top:815.15px;height:20px;line-height:20px;font-size:14px;white-space:pre;color:#000;transform:scaleX(0.94)">79</div>
<div style="position:absolute;transform-origin:100% 0;right:326px;top:815.15px;height:20px;line-height:20px;font-size:14px;white-space:pre;color:#000;transform:scaleX(0.94)">83</div>
<div style="position:absolute;transform-origin:100% 0;right:76px;top:815.15px;height:20px;line-height:20px;font-size:14px;white-space:pre;color:#000;transform:scaleX(0.94)">87</div>
<div style="position:absolute;transform-origin:0 0;left:43.7px;top:836.15px;height:20px;line-height:20px;font-size:14px;white-space:pre;color:#000;transform:scaleX(0.924)">General &amp; Administrative</div>
<div style="position:absolute;transform-origin:100% 0;right:1326px;top:836.15px;height:20px;line-height:20px;font-size:14px;white-space:pre;color:#000;transform:scaleX(0.94)">337</div>
<div style="position:absolute;transform-origin:100% 0;right:1076px;top:836.15px;height:20px;line-height:20px;font-size:14px;white-space:pre;color:#000;transform:scaleX(0.94)">355</div>
<div style="position:absolute;transform-origin:100% 0;right:826px;top:836.15px;height:20px;line-height:20px;font-size:14px;white-space:pre;color:#000;transform:scaleX(0.94)">374</div>
<div style="position:absolute;transform-origin:100% 0;right:576px;top:836.15px;height:20px;line-height:20px;font-size:14px;white-space:pre;color:#000;transform:scaleX(0.94)">394</div>
<div style="position:absolute;transform-origin:100% 0;right:326px;top:836.15px;height:20px;line-height:20px;font-size:14px;white-space:pre;color:#000;transform:scaleX(0.94)">414</div>
<div style="position:absolute;transform-origin:100% 0;right:76px;top:836.15px;height:20px;line-height:20px;font-size:14px;white-space:pre;color:#000;transform:scaleX(0.94)">435</div>
<div style="position:absolute;transform-origin:0 0;left:28px;top:857.15px;height:20px;line-height:20px;font-size:14px;white-space:pre;color:#000;font-weight:normal;-webkit-text-stroke:0.55px currentColor;transform:scaleX(0.933);transform:scaleX(0.9293)">TOTAL TECHNOLOGY &amp; GENERAL</div>
<div style="position:absolute;transform-origin:100% 0;right:1326px;top:857.15px;height:20px;line-height:20px;font-size:14px;white-space:pre;color:#000;font-weight:normal;-webkit-text-stroke:0.55px currentColor;transform:scaleX(0.933);-webkit-text-stroke:0.45px currentColor">505</div>
<div style="position:absolute;transform-origin:100% 0;right:1076px;top:857.15px;height:20px;line-height:20px;font-size:14px;white-space:pre;color:#000;font-weight:normal;-webkit-text-stroke:0.55px currentColor;transform:scaleX(0.933);-webkit-text-stroke:0.45px currentColor">533</div>
<div style="position:absolute;transform-origin:100% 0;right:826px;top:857.15px;height:20px;line-height:20px;font-size:14px;white-space:pre;color:#000;font-weight:normal;-webkit-text-stroke:0.55px currentColor;transform:scaleX(0.933);-webkit-text-stroke:0.45px currentColor">561</div>
<div style="position:absolute;transform-origin:100% 0;right:576px;top:857.15px;height:20px;line-height:20px;font-size:14px;white-space:pre;color:#000;font-weight:normal;-webkit-text-stroke:0.55px currentColor;transform:scaleX(0.933);-webkit-text-stroke:0.45px currentColor">591</div>
<div style="position:absolute;transform-origin:100% 0;right:326px;top:857.15px;height:20px;line-height:20px;font-size:14px;white-space:pre;color:#000;font-weight:normal;-webkit-text-stroke:0.55px currentColor;transform:scaleX(0.933);-webkit-text-stroke:0.45px currentColor">621</div>
<div style="position:absolute;transform-origin:100% 0;right:76px;top:857.15px;height:20px;line-height:20px;font-size:14px;white-space:pre;color:#000;font-weight:normal;-webkit-text-stroke:0.55px currentColor;transform:scaleX(0.933);-webkit-text-stroke:0.45px currentColor">653</div>
<div style="position:absolute;transform-origin:0 0;left:28px;top:887.15px;height:20px;line-height:20px;font-size:14px;white-space:pre;color:#000;font-weight:normal;-webkit-text-stroke:0.55px currentColor;transform:scaleX(0.933);transform:scaleX(0.938)">TOTAL OPERATING EXPENSES</div>
<div style="position:absolute;transform-origin:100% 0;right:1326px;top:887.15px;height:20px;line-height:20px;font-size:14px;white-space:pre;color:#000;font-weight:normal;-webkit-text-stroke:0.55px currentColor;transform:scaleX(0.933);-webkit-text-stroke:0.45px currentColor">6,586</div>
<div style="position:absolute;transform-origin:100% 0;right:1076px;top:887.15px;height:20px;line-height:20px;font-size:14px;white-space:pre;color:#000;font-weight:normal;-webkit-text-stroke:0.55px currentColor;transform:scaleX(0.933);-webkit-text-stroke:0.45px currentColor">6,882</div>
<div style="position:absolute;transform-origin:100% 0;right:826px;top:887.15px;height:20px;line-height:20px;font-size:14px;white-space:pre;color:#000;font-weight:normal;-webkit-text-stroke:0.55px currentColor;transform:scaleX(0.933);-webkit-text-stroke:0.45px currentColor">7,184</div>
<div style="position:absolute;transform-origin:100% 0;right:576px;top:887.15px;height:20px;line-height:20px;font-size:14px;white-space:pre;color:#000;font-weight:normal;-webkit-text-stroke:0.55px currentColor;transform:scaleX(0.933);-webkit-text-stroke:0.45px currentColor">7,499</div>
<div style="position:absolute;transform-origin:100% 0;right:326px;top:887.15px;height:20px;line-height:20px;font-size:14px;white-space:pre;color:#000;font-weight:normal;-webkit-text-stroke:0.55px currentColor;transform:scaleX(0.933);-webkit-text-stroke:0.45px currentColor">7,821</div>
<div style="position:absolute;transform-origin:100% 0;right:76px;top:887.15px;height:20px;line-height:20px;font-size:14px;white-space:pre;color:#000;font-weight:normal;-webkit-text-stroke:0.55px currentColor;transform:scaleX(0.933);-webkit-text-stroke:0.45px currentColor">8,158</div>
<div style="position:absolute;left:347px;top:6px;width:1px;height:900px;background:#9a9a9a"></div>
<div style="position:absolute;left:1894px;top:25px;width:1px;height:881px;background:#a6a6a6"></div>
<div style="position:absolute;left:1848px;top:25px;width:46px;height:1px;background:#a6a6a6"></div>
<div style="position:absolute;left:1895px;top:0px;width:26px;height:907px;background:#e6e6e6"></div>
<div style="position:absolute;left:1898px;top:8px;width:19px;height:19px;background:#fff;border:1px solid #a0a0a0"></div>
<svg style="position:absolute;left:1898px;top:8px" width="19" height="19"><polygon points="5,12 14,12 9.5,7" fill="#222"/></svg>
<div style="position:absolute;left:1898px;top:28px;width:19px;height:749px;background:#fff;border:1px solid #a0a0a0"></div>
<div style="position:absolute;left:1898px;top:777px;width:19px;height:110px;background:#f0f0f0"></div>
<div style="position:absolute;left:1898px;top:887px;width:19px;height:19px;background:#fff;border:1px solid #a0a0a0"></div>
<svg style="position:absolute;left:1898px;top:887px" width="19" height="19"><polygon points="5,7 14,7 9.5,12" fill="#222"/></svg>
<div style="position:absolute;left:1920px;top:0px;width:1px;height:966px;background:#8a8a8a"></div>
<div style="position:absolute;left:0px;top:906px;width:1895px;height:1px;background:#9e9e9e"></div>
<div style="position:absolute;left:0px;top:907px;width:1920px;height:31px;background:#e6e6e6"></div>
<svg style="position:absolute;left:0;top:907px" width="120" height="31"><polygon points="35,11 35,20 30,15.5" fill="#1d6b41"/><polygon points="62,11 62,20 67,15.5" fill="#1d6b41"/><rect x="90" y="17" width="2" height="2" fill="#1d6b41"/><rect x="95" y="17" width="2" height="2" fill="#1d6b41"/><rect x="100" y="17" width="2" height="2" fill="#1d6b41"/></svg>
<div style="position:absolute;left:112px;top:910px;width:1px;height:24px;background:#979797"></div>
<div style="position:absolute;left:220px;top:910px;width:1px;height:24px;background:#979797"></div>
<div style="position:absolute;left:346px;top:910px;width:1px;height:24px;background:#979797"></div>
<div style="position:absolute;left:516px;top:910px;width:1px;height:24px;background:#979797"></div>
<div style="position:absolute;left:652px;top:910px;width:1px;height:24px;background:#979797"></div>
<div style="position:absolute;left:845px;top:910px;width:1px;height:24px;background:#979797"></div>
<div style="position:absolute;left:1034px;top:910px;width:1px;height:24px;background:#979797"></div>
<div style="position:absolute;left:1230px;top:910px;width:1px;height:24px;background:#979797"></div>
<div style="letter-spacing:-0.16px;position:absolute;left:126px;top:909px;line-height:24px;font-size:17px;color:#333;white-space:pre">Dislcaimer</div>
<div style="position:absolute;left:223px;top:909px;width:121px;height:26px;background:#c8a64c"></div>
<div style="letter-spacing:-0.07px;position:absolute;left:233.7px;top:909px;line-height:24px;font-size:17px;color:#1c1c1c;white-space:pre">Assumptions</div>
<div style="position:absolute;left:349px;top:909px;width:166px;height:26px;background:#1f3a7b"></div>
<div style="letter-spacing:0.207px;position:absolute;left:360.8px;top:909px;line-height:24px;font-size:17px;color:#fff;white-space:pre">Income Statement</div>
<div style="position:absolute;left:520px;top:909px;width:130px;height:26px;background:#1f3a7b"></div>
<div style="letter-spacing:-0.35px;position:absolute;left:530.5px;top:909px;line-height:24px;font-size:17px;color:#fff;white-space:pre">Balance Sheet</div>
<div style="position:absolute;left:655px;top:909px;width:188px;height:26px;background:#1f3a7b"></div>
<div style="letter-spacing:-0.178px;position:absolute;left:667.7px;top:909px;line-height:24px;font-size:17px;color:#fff;white-space:pre">Cash Flow Statement</div>
<div style="position:absolute;left:848px;top:909px;width:184px;height:26px;background:#27ae60"></div>
<div style="letter-spacing:0.255px;position:absolute;left:861.5px;top:909px;line-height:24px;font-size:17px;color:#1c1c1c;white-space:pre">Investment Portfolio</div>
<div style="position:absolute;left:1037px;top:909px;width:191px;height:26px;background:#17a086"></div>
<div style="letter-spacing:0.2px;position:absolute;left:1051px;top:909px;line-height:24px;font-size:17px;color:#fff;white-space:pre">Capital Contributions</div>
<div style="position:absolute;left:1233px;top:909px;width:172px;height:26px;background:#e67e22"></div>
<div style="letter-spacing:0.419px;position:absolute;left:1247px;top:909px;line-height:24px;font-size:17px;color:#1c1c1c;white-space:pre">Distribution Model</div>
<div style="position:absolute;left:1407px;top:906px;width:183px;height:29px;background:#fff;border-left:1px solid #9a9a9a;border-right:1px solid #c8c8c8"></div>
<div style="position:absolute;left:1410px;top:910px;width:178px;height:22px;background:linear-gradient(#ffffff 0%,#f3eaf6 30%,#c9a6dc 100%)"></div>
<div style="position:absolute;left:1407px;top:933px;width:183px;height:2px;background:#1e6e3a"></div>
<div style="letter-spacing:-0.062px;position:absolute;left:1418.8px;top:908.2px;line-height:24px;font-size:16.3px;font-weight:bold;color:#1d6e42;white-space:pre">Operating Expenses</div>
<div style="position:absolute;left:1592px;top:909px;width:98px;height:26px;background:#2c3e50;overflow:hidden">
<div style="position:absolute;left:10px;top:0px;line-height:24px;font-size:17px;color:#fff;white-space:pre">Personnel Planning</div></div>
<svg style="position:absolute;left:1690px;top:907px" width="230" height="31"><rect x="10" y="17" width="2" height="2" fill="#1d6b41"/><rect x="15" y="17" width="2" height="2" fill="#1d6b41"/><rect x="20" y="17" width="2" height="2" fill="#1d6b41"/><circle cx="48" cy="15.8" r="9.3" fill="none" stroke="#777" stroke-width="1.2"/><rect x="43" y="15" width="10" height="2" fill="#777"/><rect x="47" y="11" width="2" height="10" fill="#777"/><rect x="78.5" y="9" width="2.5" height="2.5" fill="#bbb"/><rect x="78.5" y="14.5" width="2.5" height="2.5" fill="#bbb"/><rect x="78.5" y="20" width="2.5" height="2.5" fill="#bbb"/><rect x="98.5" y="6.5" width="18" height="18" fill="#fff" stroke="#999"/><polygon points="110,11 110,20 105,15.5" fill="#111"/><rect x="117" y="7" width="27" height="17" fill="#ececec"/><rect x="144.5" y="6.5" width="39" height="18" fill="#fff" stroke="#999"/><rect x="184.5" y="6.5" width="18" height="18" fill="#fff" stroke="#999"/><polygon points="192,11 192,20 197,15.5" fill="#111"/></svg>
<div style="position:absolute;left:0px;top:938px;width:1920px;height:1px;background:#cfcfcf"></div>
<div style="position:absolute;left:0px;top:939px;width:1920px;height:27px;background:#f3f3f3"></div>
<div style="position:absolute;left:0px;top:965px;width:1921px;height:1px;background:#9a9696"></div>
<div style="letter-spacing:-0.225px;position:absolute;left:14px;top:944px;line-height:18px;font-size:12.6px;color:#333;white-space:pre">Ready</div>
<svg style="position:absolute;left:74px;top:941px" width="22" height="22"><circle cx="6.4" cy="6.2" r="3.2" fill="#595959"/><rect x="11" y="4.1" width="6.9" height="3.6" fill="#595959"/><path d="M4.6,10.3 V17.3 H17.3 V7.7" fill="none" stroke="#595959" stroke-width="1"/><rect x="10" y="8.8" width="1.8" height="1.1" fill="#595959"/><rect x="13.1" y="8.8" width="1.9" height="1.1" fill="#595959"/><rect x="6.9" y="11.9" width="2" height="1.1" fill="#595959"/><rect x="10" y="11.9" width="1.8" height="1.1" fill="#595959"/><rect x="13.1" y="11.9" width="1.9" height="1.1" fill="#595959"/><rect x="6.9" y="15" width="2" height="1.1" fill="#595959"/><rect x="10" y="15" width="1.8" height="1.1" fill="#595959"/><rect x="13.1" y="15" width="1.9" height="1.1" fill="#595959"/></svg>
<svg style="position:absolute;left:112px;top:940px" width="26" height="26"><path d="M9.5,5 A7.2,7.2 0 0 0 10.5,19.3" fill="none" stroke="#444" stroke-width="1.2" stroke-dasharray="3,1.6"/><path d="M11.5,4 V10.5" stroke="#444" stroke-width="1.2"/><polygon points="9,10 14,10 11.5,12.9" fill="#444"/><path d="M15,10.3 H17.5" stroke="#444" stroke-width="1.2"/><polygon points="17.2,8 17.2,12.6 20,10.3" fill="#444"/><path d="M14,14 L22.5,21.6" stroke="#444" stroke-width="1.7"/><path d="M22.5,13.8 L13.7,21.2" stroke="#444" stroke-width="1.9"/></svg>
<div style="letter-spacing:0.021px;position:absolute;left:138px;top:944px;line-height:18px;font-size:12.7px;font-weight:bold;color:#222;white-space:pre">Accessibility: Investigate</div>
<svg style="position:absolute;left:1405px;top:940px" width="26" height="26"><rect x="4.2" y="3.2" width="18.6" height="12.3" rx="1.2" fill="#4f4f4f"/><polygon points="8.6,19 12.6,19 12.6,20.8 8,20.8" fill="#4f4f4f"/><circle cx="17.5" cy="16.4" r="6.6" fill="#f3f3f3"/><polygon points="21.23,17.54 22.72,17.32 22.72,15.48 21.23,15.26 20.35,13.74 20.91,12.34 19.31,11.42 18.38,12.60 16.62,12.60 15.69,11.42 14.09,12.34 14.65,13.74 13.77,15.26 12.28,15.48 12.28,17.32 13.77,17.54 14.65,19.06 14.09,20.46 15.69,21.38 16.62,20.20 18.38,20.20 19.31,21.38 20.91,20.46 20.35,19.06" fill="#4f4f4f"/><circle cx="17.5" cy="16.4" r="1.7" fill="#f3f3f3"/></svg>
<div style="letter-spacing:0.069px;position:absolute;left:1430px;top:944px;line-height:18px;font-size:12.7px;color:#333;white-space:pre">Display Settings</div>
<div style="position:absolute;left:1547px;top:939px;width:50px;height:26px;background:#c6c6c6"></div>
<svg style="position:absolute;left:1560px;top:940px" width="130" height="24"><rect x="4.5" y="4.5" width="15" height="15" fill="none" stroke="#777"/><path d="M9.5,4.5 V19.5 M14.5,4.5 V19.5 M4.5,9.5 H19.5 M4.5,14.5 H19.5" stroke="#777"/><rect x="53.5" y="4.5" width="16" height="14" fill="none" stroke="#777"/><rect x="57.7" y="6.6" width="7.9" height="10" fill="none" stroke="#777"/><path d="M59,9.2 H64 M59,11.35 H64 M59,13.3 H64" stroke="#777"/><rect x="103.5" y="4.5" width="16" height="15" fill="none" stroke="#777"/><path d="M103.5,13.5 H113.5 V4.5 M108.5,4.5 V13.5" fill="none" stroke="#777"/></svg>
<svg style="position:absolute;left:1700px;top:940px" width="120" height="24"><rect x="4" y="11" width="10" height="1.2" fill="#444"/><rect x="20" y="12" width="125" height="1" fill="#444"/></svg>
<div style="position:absolute;left:1720px;top:952px;width:125px;height:1px;background:#444"></div>
<div style="position:absolute;left:1767px;top:945px;width:6px;height:14px;background:#444"></div>
<div style="position:absolute;left:1782px;top:949px;width:1px;height:7px;background:#444"></div>
<div style="position:absolute;left:1851px;top:951px;width:10px;height:1.3px;background:#444"></div>
<div style="position:absolute;left:1855.5px;top:946.5px;width:1.3px;height:10px;background:#444"></div>
<div style="letter-spacing:-0.5px;position:absolute;left:1877px;top:944px;line-height:18px;font-size:12.3px;color:#333;white-space:pre">80%</div>
</body></html>
